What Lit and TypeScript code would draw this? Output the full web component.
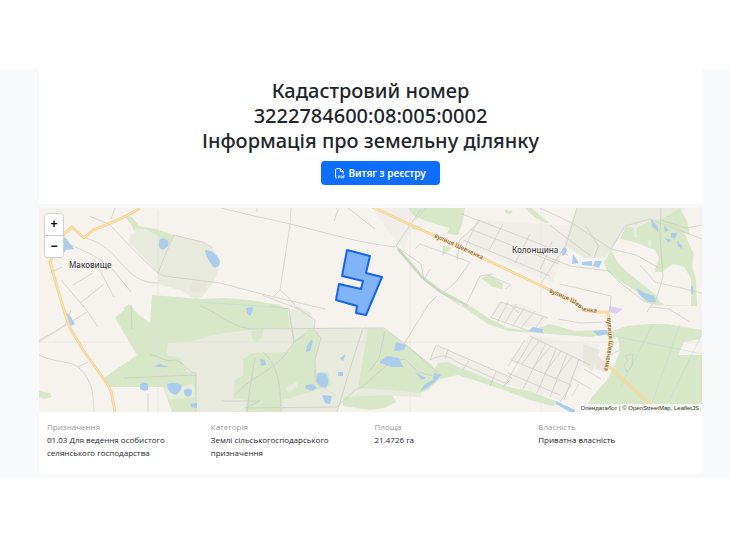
import { LitElement, html, css, svg } from "lit";
import { customElement, state } from "lit/decorators.js";

const forests = [
  "M123 215L132 217L139 226L156 229L174 235L168 246L158 236L147 230L136 229L131 235L128 241L134 231L131 224Z",
  "M152 295L200 299L223 298L238 299L250 300L268 303L280 305L288 310L290 328L255 330L225 333L210 336L192 341L168 343L167 355L180 358L187 372L196 374L196 386L163 387L108 387L105 377L137 355L115 318L129 305L139 315L150 323Z",
  "M163 387L196 386L196 412L172 412Z",
  "M252 353L290 352L293 342L301 335L310 329L318 332L320 342L315 362L317 372L328 372L332 385L322 388L303 394L283 400L280 412L245 412L247 400L233 398L235 380L243 375L243 359Z",
  "M251 331L263 330L262 338L257 342L252 339Z",
  "M368 329L384 329L396 338L410 348L433 366L442 377L428 390L420 393L390 390L358 388Z",
  "M343 397L392 395L396 402L385 408L370 410L343 406Z",
  "M123 309L132 305L132 309Z",
  "M408 208L465 208L462 224L458 235L447 234L449 228L429 222L414 216Z",
  "M410 225L420 226L419 230L412 229Z",
  "M481 278L488 275L503 283L502 289L493 287Z",
  "M443 246L452 248L442 256Z",
  "M505 210L513 211L510 214L505 213Z",
  "M525 208L532 208L540 216L550 223L545 223L534 217Z",
  "M604 262L611 250L618 263L626 271L642 284L656 295L660 302L666 306L702 306L702 330L668 324L650 324L627 326L610 332L618 338L620 351L612 371L606 381L592 397L584 412L702 412L702 355L678 355L684 342L700 339L702 331L702 306L657 305L646 303L636 291L620 281L607 271Z",
  "M620 239L626 226L636 228L651 220L662 219L680 208L687 221L690 235L684 232L689 244L694 254L692 266L696 280L697 306L691 306L691 278L684 267L673 264L662 272L655 272L653 276L659 258L655 250L634 242Z",
  "M460 305L470 306L490 319L508 328L530 331L550 324L575 331L602 330L612 330L616 339L604 334L590 337L550 334L508 331L488 324Z",
  "M433 371L438 363L447 362L463 369L486 378L508 387L530 391L550 399L560 403L552 406L530 400L507 391L483 383L458 375L440 379Z",
  "M39 391L50 393L52 397L45 399L39 397Z",
  "M123 308L129 304L134 309Z",
];

const scrubs = [
  "M128 242L136 230L156 231L174 235L203 242L213 248L220 264L215 280L203 296L197 300L180 290L158 284L158 272Z",
  "M168 342L192 337L210 336L225 333L290 328L383 328L396 337L410 348L433 366L420 392L422 397L392 396L343 397L337 412L196 412L196 374L187 373L180 360L167 355Z",
  "M289 313L298 306L311 313L314 328L290 328Z",
  "M577 208L686 208L671 219L651 220L636 227L625 226L611 251L604 258L585 258L563 245L569 228Z",
];

const residential = [
  "M376 208L408 208L414 218L404 249L396 241L372 208Z",
  "M478 220L570 225L553 283L478 251L463 240Z",
  "M429 359L436 345L512 377L521 366L509 361L530 336L600 345L588 358L572 385L560 400L513 386L460 374Z",
  "M496 302L525 305L548 318L540 325L528 328L492 316Z",
];

const lakes = [
  "M65 237L74 249L66 250L62 255L58 248Z",
  "M159 240Q164 236 168 241Q170 247 163 250Q157 248 159 243Z",
  "M205 250Q215 250 220 261Q219 269 213 267Q206 258 205 250Z",
  "M67 313L71 317L75 324L71 326L67 319Z",
  "M140 384Q145 381 148 384L148 390Q143 392 140 389Z",
  "M167 384Q175 381 182 385Q181 393 175 395Q167 392 167 384Z",
  "M184 390Q188 387 192 390Q193 395 188 397Q183 395 184 390Z",
  "M190 404L197 403L197 408L191 407Z",
  "M154 366L160 364L168 367L158 367Z",
  "M246 308L253 307L252 313L250 316L247 313Z",
  "M260 359L265 360L266 365L261 366Z",
  "M311 340L313 341L310 351L306 352L307 346Z",
  "M346 354L343 361L340 358Z",
  "M338 372L343 372L343 376L338 376Z",
  "M317 374Q324 371 327 375Q331 384 325 388Q317 386 316 380Z",
  "M306 385L313 384L317 388L312 391L305 388Z",
  "M322 395L332 396L330 404L325 403Z",
  "M396 342L406 345L404 350L394 351Z",
  "M380 361L387 356L399 358L403 367L392 367L380 363Z",
  "M415 372L426 378L422 380Z",
  "M441 375L438 379L427 388L420 391L425 384L433 380L434 373Z",
  "M528 331L533 327L543 329L543 333Z",
  "M562 249Q566 245 567 250Q565 257 562 255Z",
  "M573 254L577 260L579 263L572 264Z",
  "M582 262L592 261L592 266L582 265Z",
  "M595 261L602 261L599 268L593 266Z",
  "M636 288L645 293L654 296L656 302L648 302L640 295Z",
  "M593 331L607 330L608 334L598 336Z",
  "M651 219L658 227L658 232L652 226Z",
  "M664 226L669 230L665 232Z",
  "M671 233L677 233L675 239L671 237Z",
  "M665 238L671 240L668 243Z",
  "M677 240L682 246L682 249L678 246Z",
  "M691 286L693 286L693 294L691 293Z",
  "M556 401L575 410L575 412L570 412L556 404Z",
];

const grayAreas = ["M190 284L207 282L204 292L190 292Z", "M583 344L600 350L593 370L583 365Z", "M597 355L607 363L605 372L595 369Z"];

const lanes = [
  "M89 216L109 224M115 208L111 219M109 224C124 239 131 249 158 273L164 276L220 283L270 296L325 309",
  "M85 238C104 243 111 252 121 263S139 283 158 283",
  "M60 240C79 250 94 252 114 271L131 292",
  "M50 273L62 267M73 285L93 273M80 303L104 284M94 259L114 297M61 280L84 307",
  "M221 208C260 218 281 221 314 230S366 243 395 247M291 208L290 225L280 290L274 296M280 290L288 297L299 310M257 208L257 212M338 210L334 221M348 208L375 229M262 295L299 309L315 320L314 329",
  "M158 273L166 253L174 235M173 235L203 242L213 248",
  "M39 342L65 325L71 310M39 355C52 362 71 361 78 367C93 381 93 393 94 412M78 367L88 362M83 305L98 327M39 340L55 332L87 312M131 306L132 329",
  "M150 355C161 355 162 363 175 360C187 364 187 373 196 373M124 378L196 375M196 373L196 412M148 393L148 412",
  "M200 306C224 315 231 330 260 329L362 328M271 306L289 309L294 342M290 317L294 342C279 370 249 377 235 395M294 342L305 335M313 329L321 338L315 360L315 378M255 357L250 388L247 412M263 352C280 366 280 389 281 412M221 401L260 401L245 408L337 407L355 390L362 387L395 358M363 328L354 356L337 412M363 328L384 328",
  "M385 331L379 358L369 372M384 328L410 348L440 375M380 363L405 359L418 372L433 376M404 344L428 305L437 296M396 246L421 209M396 246L424 280L439 291L460 305",
  "M397 247L421 264L424 280M424 280L430 269M415 249L420 244L470 262L456 282L444 292M457 260L460 240L480 221L462 214M426 208L415 220M467 303L480 276L493 274M488 275L511 285L505 289",
  "M540 208L572 223L611 249L636 255L659 268M577 208L566 245L540 285M611 249L625 226L650 219L702 239M661 208L660 236L663 277L657 297L647 312M660 220L687 228L702 225M550 225L568 239L591 256",
  "M530 250L570 266L609 271L618 281L645 302M560 284L611 296L610 312M594 258L598 247M586 226L599 247M640 265L655 282L702 293M650 307L669 309L690 322",
  "M558 319L580 323L607 322M610 355L620 350",
];

const streetGrid = [
  "M478 220L568 255M470 229L559 264M463 240L550 276M478 220L462 254M503 224L489 250M530 234L515 263M552 242L540 270",
  "M430 360L436 345L512 378L503 387M430 360C444 353 448 356 457 362L507 384M448 349L445 359M470 359L462 371M496 372L490 386",
  "M533 337L504 386M546 343L523 389M556 349L537 393M567 354L550 397M579 359L564 400M530 336L590 365M512 360L571 385M508 373L560 395M525 340L508 366",
  "M540 340L522 364M551 346L532 369M561 351L544 374M572 357L555 379",
  "M501 302L491 317M508 302L497 323M516 304L504 325M525 307L512 327M535 311L520 329M544 316L534 330M501 302L548 318M490 317L529 331M512 307L519 313",
  "M571 385L560 402M584 369L601 379M570 377L591 389M579 384L572 396",
];

const tileEdges = ["M39 342H702M158 210V412M410 208V412M541 208V412"];

const streams = [
  "M200 302L270 307L290 309M314 380L336 396",
  "M653 324L621 386M680 324L652 403M702 334L670 399M594 332L703 354",
];

const highways = [
  "M140 208Q125 218 93 230L84 238L72 227L64 234L50 262L55 280L63 307L70 328L83 350L103 378Q111 389 112 395L115 412",
  "M372 207L437 237L480 257L510 271L550 290L576 302L583 310L598 312H608L611 342L607 365L627 383L647 402L660 413",
];

const paths = (items: string[]) => items.map((d) => svg`<path d=${d}></path>`);

@customElement("parcel-map")
class ParcelMap extends LitElement {
  @state() private zoom = 1;

  static styles = css`
    :host { display: block; position: relative; overflow: hidden; background: #f6f3ef; }
    .map { display: block; width: 100%; height: auto; transform-origin: center; }
    .forest { fill: #d7e7c8; }
    .scrub { fill: #e7eadd; }
    .homes { fill: #f1eeea; }
    .gray { fill: #e6e2dc; opacity: .8; }
    .lake { fill: #acccec; }
    .lane { fill: none; stroke: #c8c7c3; stroke-width: 1; opacity: .65; }
    .grid { fill: none; stroke: #c4c3c0; stroke-width: 1; opacity: .6; }
    .edge { fill: none; stroke: #e4e1dc; stroke-width: 1; opacity: .5; }
    .stream { fill: none; stroke: #b3d5d7; stroke-width: 1; opacity: .4; }
    .green-stream { fill: none; stroke: #c8dfc0; stroke-width: 3; }
    .casing { fill: none; stroke: #f3d49a; stroke-width: 3; stroke-linejoin: round; }
    .highway { fill: none; stroke: #fde3b0; stroke-width: 1; stroke-linejoin: round; }
    .parcel { fill: #3388ff; fill-opacity: .6; stroke: #1466e8; stroke-width: 2; stroke-linejoin: round; }
    text { font-family: "Noto Sans", sans-serif; fill: #444; stroke: #f7f5f2; stroke-width: 2; paint-order: stroke; }
    .place { font-size: 8px; font-weight: 500; }
    .street { font-size: 6px; font-weight: 500; fill: #75603d; stroke: #f9e7bf; stroke-width: 1; }
    .guide { fill: none; }
    .controls {
      position: absolute; top: 5px; left: 5px; width: 20px; display: grid;
      border: 1px solid #d0d0cd; border-radius: 4px; overflow: hidden; box-sizing: border-box;
    }
    .controls button {
      height: 21px; padding: 0; border: 0; background: #fff; color: #000; cursor: pointer;
      font: 700 12px/21px "Liberation Sans", sans-serif;
    }
    .controls button + button { border-top: 1px solid #ccc; height: 22px; }
    .credits {
      position: absolute; right: 0; bottom: 0; padding: 0 3px; background: rgba(255, 255, 255, .75);
      font: 6px/8px "Liberation Sans", sans-serif; color: #333; white-space: nowrap;
    }
    .credits a { color: inherit; text-decoration: none; }
  `;

  render() {
    return html`
      <svg class="map" viewBox="39 208 663 204" role="img" aria-label="Мапа ділянки" style="transform: scale(${this.zoom})">
        <g class="homes">${paths(residential)}</g>
        <g class="scrub">${paths(scrubs)}</g>
        <g class="forest">${paths(forests)}</g>
        <g class="gray">${paths(grayAreas)}</g>
        <path class="scrub" d="M164 388L194 384L196 397L169 399ZM286 388L297 382L298 387L288 393ZM634 228L637 227L637 237L634 237ZM648 240L651 240L651 247L648 247Z"></path>
        <path fill="#ddd0ed" d="M609 306L623 309L616 314L609 312Z"></path>
        <path class="green-stream" d="M398 249L423 278L440 291L468 306"></path>
        <g class="edge">${paths(tileEdges)}</g>
        <g class="lane">${paths(lanes)}</g>
        <g class="grid">${paths(streetGrid)}</g>
        <g class="stream">${paths(streams)}</g>
        <g class="lake">${paths(lakes)}</g>
        <path class="lane" d="M625 356L633 354L632 366L627 372L624 365L628 361Z"></path>
        <g class="casing">${paths(highways)}</g>
        <g class="highway">${paths(highways)}</g>
        <path class="parcel" d="M347 250L370 256L366 273L382 277L366 315L356 313L357 306L336 300L339 284L361 289L363 281L342 276Z"></path>
        <text class="place" x="69" y="268">Маковище</text>
        <text class="place" x="512" y="253">Колонщина</text>
        <path id="street-west" class="guide" d="M434 237L490 263"></path>
        <path id="street-middle" class="guide" d="M549 292L573 303L583 311L606 314"></path>
        <path id="street-south" class="guide" d="M607 318L609 342L604 372"></path>
        <text class="street"><textPath href="#street-west">вулиця Шевченка</textPath></text>
        <text class="street"><textPath href="#street-middle">вулиця Шевченка</textPath></text>
        <text class="street"><textPath href="#street-south">вулиця Шевченка</textPath></text>
      </svg>
      <div class="controls">
        <button type="button" aria-label="Збільшити" @click=${() => (this.zoom = Math.min(4, this.zoom * 2))}>+</button>
        <button type="button" aria-label="Зменшити" @click=${() => (this.zoom = Math.max(1, this.zoom / 2))}>−</button>
      </div>
      <div class="credits"><a href="#opendatabot">Опендатабот</a> | © <a href="#osm">OpenStreetMap</a>, <a href="#leaflet">LeafletJS</a></div>
    `;
  }
}

const facts = [
  ["Призначення", "01.03 Для ведення особистого селянського господарства"],
  ["Категорія", "Землі сільськогосподарського призначення"],
  ["Площа", "21.4726 га"],
  ["Власність", "Приватна власність"],
];

@customElement("app-root")
class AppRoot extends LitElement {
  static styles = css`
    :host { display: block; padding: 69px 0; background: #fff; color: #212529; font-family: "Noto Sans", sans-serif; }
    main { padding: 0 28px 4px 39px; background: #f8f9fb; }
    .summary { padding: 9px 16px 19px; background: #fff; text-align: center; border-radius: 0 0 4px 4px; }
    h1 { margin: 0 0 8px; font-size: 20px; font-weight: 500; line-height: 25px; }
    .extract {
      display: inline-flex; align-items: center; justify-content: center; gap: 3px; height: 24px;
      margin-left: 20px; padding: 0 14px; border: 0; border-radius: 4px; background: #0d6efd; color: #fff; cursor: pointer;
      font: 600 10px/24px "Noto Sans", sans-serif; vertical-align: top;
    }
    .extract svg { width: 10px; height: 11px; }
    parcel-map { margin-top: 4px; }
    dl {
      display: grid; grid-template-columns: repeat(4, 1fr); margin: 0; padding: 9px 4px 15px;
      background: #fff; border-radius: 0 0 4px 4px; font-family: "Open Sans", "Noto Sans", sans-serif; font-size: 8px; line-height: 12px;
    }
    .fact { padding: 0 32px 0 4px; }
    dt { color: #999; }
    dd { margin: 0; line-height: 13px; }
  `;

  render() {
    return html`
      <main>
        <section class="summary">
          <h1>Кадастровий номер<br />3222784600:08:005:0002<br />Інформація про земельну ділянку</h1>
          <button class="extract" type="button">
            <svg viewBox="0 0 10 11" fill="none" stroke="currentColor" aria-hidden="true">
              <path d="M2 10H1.6Q.6 10 .6 9V1.6Q.6.6 1.6.6H5.4L8.2 3.4V6.2M5.4.6V3.4H8.2"></path>
              <path stroke-width=".7" d="M3.4 10.5V7.7H4.2Q5 7.7 5 8.5T4.2 9.2H3.4M6 7.7V10.2H6.5Q7.4 10.2 7.4 9T6.5 7.7ZM8.4 10.5V7.7H9.8M8.4 9.1H9.6"></path>
            </svg>
            Витяг з реєстру
          </button>
        </section>
        <parcel-map></parcel-map>
        <dl>${facts.map(([name, value]) => html`<div class="fact"><dt>${name}</dt><dd>${value}</dd></div>`)}</dl>
      </main>
    `;
  }
}
